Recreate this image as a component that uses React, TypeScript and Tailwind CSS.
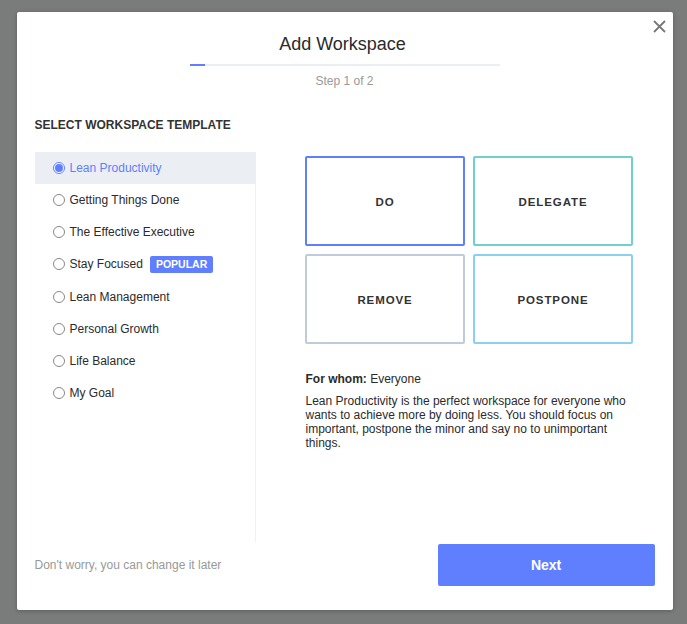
const templates = [
	{ name: "Lean Productivity", active: true },
	{ name: "Getting Things Done" },
	{ name: "The Effective Executive" },
	{ name: "Stay Focused", popular: true },
	{ name: "Lean Management" },
	{ name: "Personal Growth" },
	{ name: "Life Balance" },
	{ name: "My Goal" },
];

const quadrants = [
	{ label: "DO", border: "border-[#5f7fff]" },
	{ label: "DELEGATE", border: "border-[#6fd0cd]" },
	{ label: "REMOVE", border: "border-[#bfcbdb]" },
	{ label: "POSTPONE", border: "border-[#8bd0f3]" },
];

export default function App() {
	return (
		<div className="h-[624px] w-[687px] overflow-hidden bg-[#7a7c7b] pl-[17px] pt-[12px] font-['Liberation_Sans',Arial,sans-serif]">
			<div className="relative flex h-[598px] w-[656px] flex-col rounded-[2px] bg-white shadow-[0_1px_4px_rgba(0,0,0,0.25)]">
				{/* Close */}
				<svg
					className="absolute right-[7px] top-[8px] h-[13px] w-[13px] text-[#777]"
					viewBox="0 0 13 13"
					fill="none"
					stroke="currentColor"
					strokeWidth="1.8"
				>
					<path d="M1 1l11 11M12 1L1 12" />
				</svg>

				{/* Header */}
				<div className="flex flex-col items-center pt-[21px]">
					<h1 className="pr-[5px] text-[18px] leading-[22px] text-[#2b2b2b]">Add Workspace</h1>
					<div className="mt-[9px] h-[2px] w-[310px] bg-[#ebeef3]">
						<div className="h-full w-[15px] bg-[#5f7fff]" />
					</div>
					<p className="mt-[8px] pr-px text-[12px] leading-[14px] text-[#999]">Step 1 of 2</p>
				</div>

				<h2 className="ml-[17.5px] mt-[30px] text-[12px] font-bold leading-[14px] text-[#333]">
					SELECT WORKSPACE TEMPLATE
				</h2>

				{/* Body */}
				<div className="mt-[20px] flex flex-1">
					<ul className="ml-[18px] h-[390px] w-[221px] border-r border-[#eef0f4]">
						{templates.map((t) => (
							<li
								key={t.name}
								className={`flex items-center pl-[18px] text-[12px] ${
									t.popular ? "h-[33px] pb-px" : "h-[32px]"
								} ${t.active ? "-mr-px bg-[#ebeef3] text-[#5f7fff]" : "text-[#2b2b2b]"}`}
							>
								<span
									className={`mr-[4.5px] flex h-[12px] w-[12px] items-center justify-center rounded-full border bg-white ${
										t.active ? "border-[#5f7fff]" : "border-[#888]"
									}`}
								>
									{t.active && <span className="h-[8px] w-[8px] rounded-full bg-[#5f7fff]" />}
								</span>
								{t.name}
								{t.popular && (
									<span className="ml-[7px] rounded-[2px] bg-[#5f7fff] px-[6px] text-[10.5px] font-bold leading-[17px] text-white">
										POPULAR
									</span>
								)}
							</li>
						))}
					</ul>

					<div className="ml-[49px] mt-[4px] w-[328px]">
						<div className="grid grid-cols-[160px_160px] gap-[8px]">
							{quadrants.map((q) => (
								<div
									key={q.label}
									className={`flex h-[90px] items-center justify-center rounded-[2px] border-2 pt-[3px] text-[11.5px] font-bold tracking-[0.9px] text-[#333] ${q.border}`}
								>
									{q.label}
								</div>
							))}
						</div>
						<p className="mt-[28px] pl-[0.5px] text-[12px] leading-[14px] text-[#2b2b2b]">
							<b>For whom:</b> Everyone
						</p>
						<p className="mt-[8px] pl-[0.5px] text-[12px] leading-[14px] text-[#2b2b2b]">
							Lean Productivity is the perfect workspace for everyone who wants to achieve more by
							doing less. You should focus on important, postpone the minor and say no to unimportant
							things.
						</p>
					</div>
				</div>

				{/* Footer */}
				<div className="flex items-center justify-between pb-[24px] pl-[17.5px] pr-[18px]">
					<span className="text-[12px] text-[#999]">Don't worry, you can change it later</span>
					<button className="h-[42px] w-[217px] rounded-[2px] bg-[#5f7fff] pr-px text-[14px] font-bold tracking-[-0.1px] text-white">
						Next
					</button>
				</div>
			</div>
		</div>
	);
}
